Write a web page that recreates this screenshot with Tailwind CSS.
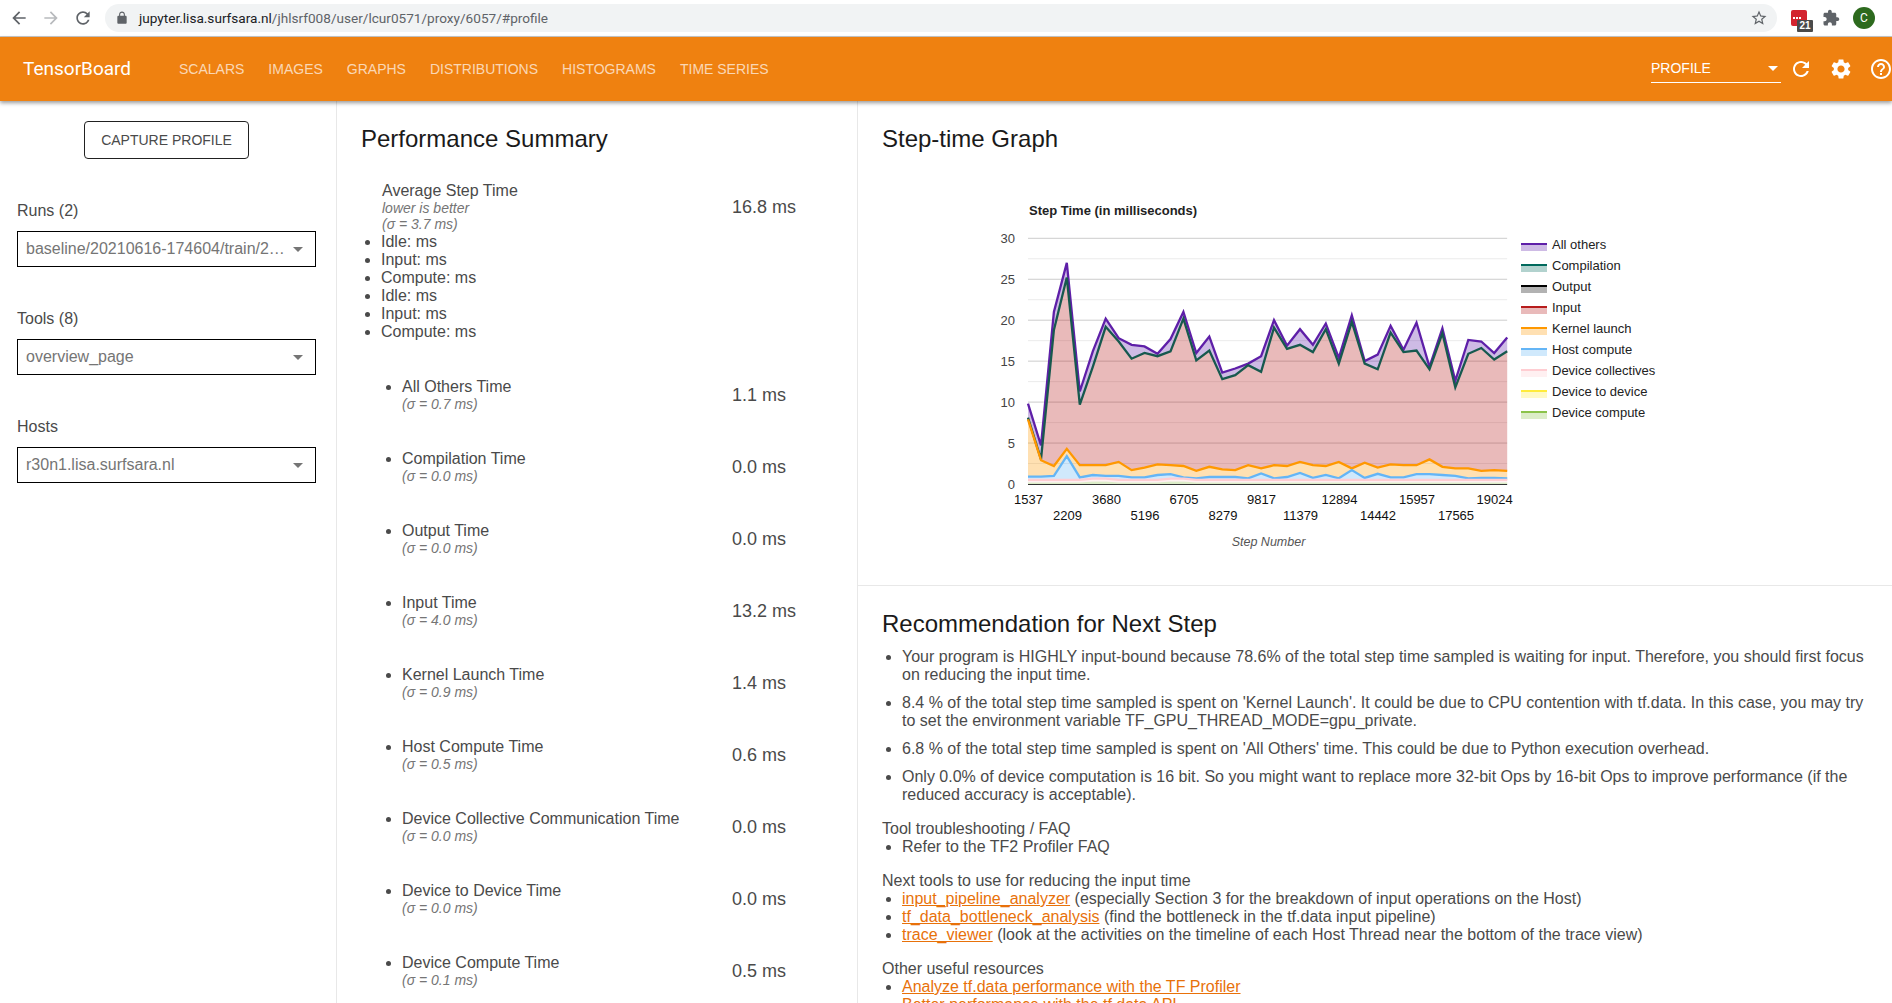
<!doctype html>
<html>
<head>
<meta charset="utf-8">
<script src="https://cdn.jsdelivr.net/npm/@tailwindcss/browser@4"></script>
<title>TensorBoard</title>
</head>
<body class="bg-white">
<div class="h-[1003px] w-[1892px] overflow-hidden flex flex-col font-['Liberation_Sans',Arial,sans-serif] text-[#4a4a4a]">

  <!-- browser chrome -->
  <div class="h-[37px] shrink-0 bg-white border-b border-[#c8c8c8] flex items-center pl-[9px] pb-[1px]">
    <svg class="w-[20px] h-[20px] fill-[#5f6368]" viewBox="0 0 24 24"><path d="M20 11H7.83l5.59-5.59L12 4l-8 8 8 8 1.41-1.41L7.83 13H20v-2z"/></svg>
    <svg class="w-[20px] h-[20px] ml-[12px] fill-[#b8babd]" viewBox="0 0 24 24"><path d="M12 4l-1.41 1.41L16.17 11H4v2h12.17l-5.58 5.59L12 20l8-8z"/></svg>
    <svg class="w-[20px] h-[20px] ml-[12px] fill-[#5f6368]" viewBox="0 0 24 24"><path d="M17.65 6.35C16.2 4.9 14.21 4 12 4c-4.42 0-7.99 3.58-7.99 8s3.57 8 7.99 8c3.73 0 6.84-2.55 7.73-6h-2.08c-.82 2.33-3.04 4-5.65 4-3.31 0-6-2.69-6-6s2.69-6 6-6c1.66 0 3.14.69 4.22 1.78L13 11h7V4l-2.35 2.35z"/></svg>
    <div class="ml-[12px] w-[1672px] h-[28px] rounded-full bg-[#f1f3f4] flex items-center pl-[10px] pr-[9px]">
      <svg class="w-[14px] h-[14px] fill-[#5f6368]" viewBox="0 0 24 24"><path d="M18 8h-1V6c0-2.76-2.24-5-5-5S7 3.24 7 6v2H6c-1.1 0-2 .9-2 2v10c0 1.1.9 2 2 2h12c1.1 0 2-.9 2-2V10c0-1.1-.9-2-2-2zm-6-5.1c1.71 0 3.1 1.39 3.1 3.1v2H8.9V6c0-1.71 1.39-3.1 3.1-3.1z"/></svg>
      <div class="ml-[10px] pt-[1px] text-[13.6px] font-['Roboto',sans-serif] text-[#5f6368]"><span class="text-[#202124]">jupyter.lisa.surfsara.nl</span>/jhlsrf008/user/lcur0571/proxy/6057/#profile</div>
      <svg class="ml-auto w-[18px] h-[18px] fill-[#5f6368]" viewBox="0 0 24 24"><path d="M22 9.24l-7.19-.62L12 2 9.19 8.63 2 9.24l5.46 4.73L5.82 21 12 17.27 18.18 21l-1.63-7.03L22 9.24zM12 15.4l-3.76 2.27 1-4.28-3.32-2.88 4.38-.38L12 6.1l1.71 4.04 4.38.38-3.32 2.88 1 4.28L12 15.4z"/></svg>
    </div>
    <div class="relative ml-[14px] w-[16px] h-[16px] rounded-[2px] bg-[#d3232f] shrink-0">
      <div class="absolute left-[2px] top-[7px] flex gap-[1px]"><span class="w-[2px] h-[2px] bg-white"></span><span class="w-[2px] h-[2px] bg-white"></span><span class="w-[2px] h-[2px] bg-white"></span></div>
      <div class="absolute left-[6px] top-[10px] w-[16px] h-[12px] rounded-[1px] bg-[#4a4a4a] text-white text-[10px] leading-[12px] font-bold text-center">21</div>
    </div>
    <svg class="ml-[15px] w-[18px] h-[18px] fill-[#5f6368] shrink-0" viewBox="0 0 24 24"><path d="M20.5 11H19V7c0-1.1-.9-2-2-2h-4V3.5C13 2.12 11.88 1 10.5 1S8 2.12 8 3.5V5H4c-1.1 0-1.99.9-1.99 2v3.8H3.5c1.49 0 2.7 1.21 2.7 2.7s-1.21 2.7-2.7 2.7H2V20c0 1.1.9 2 2 2h3.8v-1.5c0-1.49 1.21-2.7 2.7-2.7 1.49 0 2.7 1.21 2.7 2.7V22H17c1.1 0 2-.9 2-2v-4h1.5c1.38 0 2.5-1.12 2.5-2.5S21.88 11 20.5 11z"/></svg>
    <div class="ml-[13px] w-[22px] h-[22px] rounded-full bg-[#2d6a1e] text-white text-[12px] leading-[22px] text-center shrink-0 font-['Roboto',sans-serif]">C</div>
  </div>

  <!-- tensorboard header -->
  <header class="relative z-10 h-[64px] shrink-0 bg-[#ef8110] text-white flex items-center pl-[23px] shadow-[0_2px_4px_rgba(0,0,0,0.4)] font-['Roboto',sans-serif] overflow-hidden">
    <div class="text-[19px] w-[108px]">TensorBoard</div>
    <nav class="ml-[48px] flex gap-[24px] text-[14px] text-white/70 font-['Liberation_Sans',sans-serif]">
      <span>SCALARS</span><span>IMAGES</span><span>GRAPHS</span><span>DISTRIBUTIONS</span><span>HISTOGRAMS</span><span>TIME SERIES</span>
    </nav>
    <div class="absolute left-[1651px] top-[19px] w-[130px] h-[27px] border-b border-white flex items-center justify-between pr-[3px] pb-[1px] text-[14px] font-['Liberation_Sans',sans-serif]">
      <span>PROFILE</span><span class="w-0 h-0 border-x-[5px] border-t-[5px] border-x-transparent border-t-white"></span>
    </div>
    <div class="absolute left-[1789px] top-[20px] flex gap-[16px]">
      <svg class="w-[24px] h-[24px] fill-white shrink-0" viewBox="0 0 24 24"><path d="M17.65 6.35C16.2 4.9 14.21 4 12 4c-4.42 0-7.99 3.58-7.99 8s3.57 8 7.99 8c3.73 0 6.84-2.55 7.73-6h-2.08c-.82 2.33-3.04 4-5.65 4-3.31 0-6-2.69-6-6s2.69-6 6-6c1.66 0 3.14.69 4.22 1.78L13 11h7V4l-2.35 2.35z"/></svg>
      <svg class="w-[24px] h-[24px] fill-white shrink-0" viewBox="0 0 24 24"><path d="M19.14 12.94c.04-.3.06-.61.06-.94 0-.32-.02-.64-.07-.94l2.03-1.58c.18-.14.23-.41.12-.61l-1.92-3.32c-.12-.22-.37-.29-.59-.22l-2.39.96c-.5-.38-1.03-.7-1.62-.94l-.36-2.54c-.04-.24-.24-.41-.48-.41h-3.84c-.24 0-.43.17-.47.41l-.36 2.54c-.59.24-1.13.57-1.62.94l-2.39-.96c-.22-.08-.47 0-.59.22L2.74 8.87c-.12.21-.08.47.12.61l2.03 1.58c-.05.3-.09.63-.09.94s.02.64.07.94l-2.03 1.58c-.18.14-.23.41-.12.61l1.92 3.32c.12.22.37.29.59.22l2.39-.96c.5.38 1.03.7 1.62.94l.36 2.54c.05.24.24.41.48.41h3.84c.24 0 .44-.17.47-.41l.36-2.54c.59-.24 1.13-.56 1.62-.94l2.39.96c.22.08.47 0 .59-.22l1.92-3.32c.12-.22.07-.47-.12-.61l-2.01-1.58zM12 15.6c-1.98 0-3.6-1.62-3.6-3.6s1.62-3.6 3.6-3.6 3.6 1.62 3.6 3.6-1.62 3.6-3.6 3.6z"/></svg>
      <svg class="w-[24px] h-[24px] fill-white shrink-0" viewBox="0 0 24 24"><path d="M11 18h2v-2h-2v2zm1-16C6.48 2 2 6.48 2 12s4.48 10 10 10 10-4.48 10-10S17.52 2 12 2zm0 18c-4.41 0-8-3.59-8-8s3.59-8 8-8 8 3.59 8 8-3.59 8-8 8zm0-14c-2.21 0-4 1.79-4 4h2c0-1.1.9-2 2-2s2 .9 2 2c0 2-3 1.75-3 5h2c0-2.25 3-2.5 3-5 0-2.21-1.79-4-4-4z"/></svg>
    </div>
  </header>

  <main class="flex-1 flex min-h-0">
    <!-- sidebar -->
    <aside class="w-[337px] shrink-0 border-r border-[#e8e8e8] pt-[20px] px-[17px]">
      <div class="w-[165px] h-[38px] ml-[67px] border border-[#212121] rounded-[4px] flex items-center justify-center text-[14px] text-[#4a4a4a]">CAPTURE PROFILE</div>

      <div class="mt-[42px] h-[20px] text-[16px] leading-[20px]">Runs (2)</div>
      <div class="mt-[10px] w-[299px] h-[36px] border border-black flex items-center pl-[8px] pr-[12px] text-[16px] text-[#757575]">
        <span class="whitespace-nowrap">baseline/20210616-174604/train/2…</span>
        <span class="ml-auto w-0 h-0 border-x-[5px] border-t-[5px] border-x-transparent border-t-[#757575]"></span>
      </div>

      <div class="mt-[42px] h-[20px] text-[16px] leading-[20px]">Tools (8)</div>
      <div class="mt-[10px] w-[299px] h-[36px] border border-black flex items-center pl-[8px] pr-[12px] text-[16px] text-[#757575]">
        <span>overview_page</span>
        <span class="ml-auto w-0 h-0 border-x-[5px] border-t-[5px] border-x-transparent border-t-[#757575]"></span>
      </div>

      <div class="mt-[42px] h-[20px] text-[16px] leading-[20px]">Hosts</div>
      <div class="mt-[10px] w-[299px] h-[36px] border border-black flex items-center pl-[8px] pr-[12px] text-[16px] text-[#757575]">
        <span>r30n1.lisa.surfsara.nl</span>
        <span class="ml-auto w-0 h-0 border-x-[5px] border-t-[5px] border-x-transparent border-t-[#757575]"></span>
      </div>
    </aside>

    <!-- performance summary -->
    <section class="w-[521px] shrink-0 border-r border-[#e8e8e8] pt-[24px] pl-[24px]">
      <h2 class="text-[24px] leading-[28px] text-[#1a1a1a]">Performance Summary</h2>

      <div class="mt-[29px] flex h-[195px]">
        <div class="w-[371px] text-[16px] leading-[18px]">
          <div class="pl-[21px]">Average Step Time</div>
          <div class="pl-[21px] text-[14px] leading-[16px] italic text-[#757575]">lower is better</div>
          <div class="pl-[21px] text-[14px] leading-[16px] italic text-[#757575]">(σ = 3.7 ms)</div>
          <ul class="list-disc pl-[20px] mt-[1px]">
            <li>Idle: ms</li><li>Input: ms</li><li>Compute: ms</li><li>Idle: ms</li><li>Input: ms</li><li>Compute: ms</li>
          </ul>
        </div>
        <div class="mt-[14px] text-[18px] leading-[22px]">16.8 ms</div>
      </div>

      <div class="flex h-[72px]"><ul class="w-[371px] list-disc pl-[41px] pt-[1px] text-[16px] leading-[18px]"><li>All Others Time<div class="text-[14px] leading-[16px] italic text-[#757575]">(σ = 0.7 ms)</div></li></ul><div class="mt-[7px] text-[18px] leading-[22px]">1.1 ms</div></div>
      <div class="flex h-[72px]"><ul class="w-[371px] list-disc pl-[41px] pt-[1px] text-[16px] leading-[18px]"><li>Compilation Time<div class="text-[14px] leading-[16px] italic text-[#757575]">(σ = 0.0 ms)</div></li></ul><div class="mt-[7px] text-[18px] leading-[22px]">0.0 ms</div></div>
      <div class="flex h-[72px]"><ul class="w-[371px] list-disc pl-[41px] pt-[1px] text-[16px] leading-[18px]"><li>Output Time<div class="text-[14px] leading-[16px] italic text-[#757575]">(σ = 0.0 ms)</div></li></ul><div class="mt-[7px] text-[18px] leading-[22px]">0.0 ms</div></div>
      <div class="flex h-[72px]"><ul class="w-[371px] list-disc pl-[41px] pt-[1px] text-[16px] leading-[18px]"><li>Input Time<div class="text-[14px] leading-[16px] italic text-[#757575]">(σ = 4.0 ms)</div></li></ul><div class="mt-[7px] text-[18px] leading-[22px]">13.2 ms</div></div>
      <div class="flex h-[72px]"><ul class="w-[371px] list-disc pl-[41px] pt-[1px] text-[16px] leading-[18px]"><li>Kernel Launch Time<div class="text-[14px] leading-[16px] italic text-[#757575]">(σ = 0.9 ms)</div></li></ul><div class="mt-[7px] text-[18px] leading-[22px]">1.4 ms</div></div>
      <div class="flex h-[72px]"><ul class="w-[371px] list-disc pl-[41px] pt-[1px] text-[16px] leading-[18px]"><li>Host Compute Time<div class="text-[14px] leading-[16px] italic text-[#757575]">(σ = 0.5 ms)</div></li></ul><div class="mt-[7px] text-[18px] leading-[22px]">0.6 ms</div></div>
      <div class="flex h-[72px]"><ul class="w-[371px] list-disc pl-[41px] pt-[1px] text-[16px] leading-[18px]"><li>Device Collective Communication Time<div class="text-[14px] leading-[16px] italic text-[#757575]">(σ = 0.0 ms)</div></li></ul><div class="mt-[7px] text-[18px] leading-[22px]">0.0 ms</div></div>
      <div class="flex h-[72px]"><ul class="w-[371px] list-disc pl-[41px] pt-[1px] text-[16px] leading-[18px]"><li>Device to Device Time<div class="text-[14px] leading-[16px] italic text-[#757575]">(σ = 0.0 ms)</div></li></ul><div class="mt-[7px] text-[18px] leading-[22px]">0.0 ms</div></div>
      <div class="flex h-[72px]"><ul class="w-[371px] list-disc pl-[41px] pt-[1px] text-[16px] leading-[18px]"><li>Device Compute Time<div class="text-[14px] leading-[16px] italic text-[#757575]">(σ = 0.1 ms)</div></li></ul><div class="mt-[7px] text-[18px] leading-[22px]">0.5 ms</div></div>
    </section>

    <!-- right column -->
    <section class="flex-1 min-w-0">
      <div class="h-[485px] border-b border-[#e8e8e8] pt-[24px]">
        <h2 class="pl-[24px] text-[24px] leading-[28px] text-[#1a1a1a]">Step-time Graph</h2>
        <svg id="chart" class="block mt-[37px] w-[1034px] h-[390px] font-['Liberation_Sans',sans-serif]" viewBox="858 190 1034 390">
          <text x="1029" y="215" font-size="13" font-weight="bold" fill="#222">Step Time (in milliseconds)</text>
          <g id="grid"></g>
          <g id="areas"></g>
          <g font-size="13" fill="#444" text-anchor="end">
            <text x="1015" y="243">30</text><text x="1015" y="284">25</text><text x="1015" y="325">20</text><text x="1015" y="366">15</text><text x="1015" y="407">10</text><text x="1015" y="448">5</text><text x="1015" y="489">0</text>
          </g>
          <g font-size="13" fill="#111" text-anchor="middle">
            <text x="1028.5" y="504">1537</text><text x="1067.5" y="520">2209</text><text x="1106.5" y="504">3680</text><text x="1145" y="520">5196</text><text x="1184" y="504">6705</text><text x="1223" y="520">8279</text><text x="1261.5" y="504">9817</text><text x="1300.5" y="520">11379</text><text x="1339.5" y="504">12894</text><text x="1378" y="520">14442</text><text x="1417" y="504">15957</text><text x="1456" y="520">17565</text><text x="1494.7" y="504">19024</text>
          </g>
          <text x="1268.5" y="546" font-size="12.5" font-style="italic" fill="#555" text-anchor="middle">Step Number</text>
          <g font-size="13" fill="#222">
            <text x="1552" y="249">All others</text><text x="1552" y="270">Compilation</text><text x="1552" y="291">Output</text><text x="1552" y="312">Input</text><text x="1552" y="333">Kernel launch</text><text x="1552" y="354">Host compute</text><text x="1552" y="375">Device collectives</text><text x="1552" y="396">Device to device</text><text x="1552" y="417">Device compute</text>
          </g>
          <g id="legend"></g>
        </svg>
      </div>

      <div class="pt-[24px] px-[24px] text-[16px] leading-[18px]">
        <h2 class="text-[24px] leading-[28px] text-[#1a1a1a]">Recommendation for Next Step</h2>
        <ul class="mt-[10px] list-disc pl-[20px]">
          <li class="mb-[10px]">Your program is HIGHLY input-bound because 78.6% of the total step time sampled is waiting for input. Therefore, you should first focus on reducing the input time.</li>
          <li class="mb-[10px]">8.4 % of the total step time sampled is spent on 'Kernel Launch'. It could be due to CPU contention with tf.data. In this case, you may try to set the environment variable TF_GPU_THREAD_MODE=gpu_private.</li>
          <li class="mb-[10px]">6.8 % of the total step time sampled is spent on 'All Others' time. This could be due to Python execution overhead.</li>
          <li>Only 0.0% of device computation is 16 bit. So you might want to replace more 32-bit Ops by 16-bit Ops to improve performance (if the reduced accuracy is acceptable).</li>
        </ul>
        <p class="mt-[16px]">Tool troubleshooting / FAQ</p>
        <ul class="list-disc pl-[20px]"><li>Refer to the TF2 Profiler FAQ</li></ul>
        <p class="mt-[16px]">Next tools to use for reducing the input time</p>
        <ul class="list-disc pl-[20px]">
          <li><a class="underline text-[#e8710a]">input_pipeline_analyzer</a> (especially Section 3 for the breakdown of input operations on the Host)</li>
          <li><a class="underline text-[#e8710a]">tf_data_bottleneck_analysis</a> (find the bottleneck in the tf.data input pipeline)</li>
          <li><a class="underline text-[#e8710a]">trace_viewer</a> (look at the activities on the timeline of each Host Thread near the bottom of the trace view)</li>
        </ul>
        <p class="mt-[16px]">Other useful resources</p>
        <ul class="list-disc pl-[20px]">
          <li><a class="underline text-[#e8710a]">Analyze tf.data performance with the TF Profiler</a></li>
          <li><a class="underline text-[#e8710a]">Better performance with the tf.data API</a></li>
        </ul>
      </div>
    </section>
  </main>
</div>

<script>
(function(){
  var NS='http://www.w3.org/2000/svg';
  var x0=1028,dx=12.95,y0=484,k=8.19,xr=x0+37*dx;
  function el(parent,name,attrs){var e=document.createElementNS(NS,name);for(var a in attrs)e.setAttribute(a,attrs[a]);parent.appendChild(e);return e;}
  var grid=document.getElementById('grid');
  for(var i=1;i<=12;i++){var y=y0-i*2.5*k;el(grid,'line',{x1:x0,x2:xr,y1:y,y2:y,stroke:i%2?'#ebebeb':'#cccccc','stroke-width':1});}
  var all=[9.8,4.7,21,27,11.3,16.2,20.2,17.8,17,16.8,15.9,17.7,21,16,18,13.6,14.1,14.7,15.6,20,16.9,18.9,17,19.6,15.4,20.6,15,15.8,19.3,16.4,19.7,14.3,19,12.6,17.6,17.4,16,17.9];
  var green=[8.1,3,18.8,25.2,9.7,14.3,19.2,17.4,15.3,16,15.6,16.2,20.2,15.1,16.3,12.8,13.3,14.5,13.7,19.1,16.5,17,16.1,18.9,14.7,19.8,14.7,14,18.5,16.1,16.3,14,18.4,11.8,15.9,16.6,15.2,16.2];
  var orange=[7.9,2.9,2.2,4.3,2.3,2.3,2.3,2.7,1.7,2,2.4,2.3,2.2,1.6,2.1,1.8,1.7,2.3,1.9,2.3,2.2,2.7,2.3,2.2,2.7,1.9,2.6,2,2.4,2.3,2.3,3,2.1,1.9,1.9,1.6,1.7,1.6];
  var blue=[.9,.9,1,3.4,.8,1.1,1,1,.8,.8,1.1,1.2,.8,.7,.85,.85,.85,.7,1.3,.7,.85,1.35,.75,1.1,.7,1.7,.75,1.25,.8,.8,1.2,1.2,1.1,1,.7,.75,.75,.7];
  var pink=[],low=[];
  for(i=0;i<38;i++){pink.push(i==5||i==6||i==11||i==12?.65:.5);low.push(i==5||i==6||i==11||i==12?.3:.18);}
  var layers=[[low,'#8bc34a',0],[pink,'#ffcdd2',1],[blue,'#64b5f6',1],[orange,'#ff9800',1],[green,'#b71c1c',0],[green,'#17594e',1],[all,'#5e1fa8',1]];
  var areas=document.getElementById('areas');
  var prev=null;
  function pts(a){return a.map(function(v,i){return (x0+i*dx).toFixed(1)+','+(y0-v*k).toFixed(1);});}
  var lines=[];
  layers.forEach(function(l){
    var top=pts(l[0]),bot=prev?pts(prev).reverse():[xr.toFixed(1)+','+y0,x0.toFixed(1)+','+y0];
    if(l[0]!==prev){el(areas,'polygon',{points:top.concat(bot).join(' '),fill:l[1]==='#17594e'?'#5e1fa8':l[1],'fill-opacity':.3});}
    if(l[2])lines.push([top,l[1]]);
    prev=l[0];
  });
  lines.reverse();
  lines.forEach(function(l){el(areas,'polyline',{points:l[0].join(' '),fill:'none',stroke:l[1],'stroke-width':2.3});});
  el(areas,'line',{x1:x0,x2:xr,y1:y0+.5,y2:y0+.5,stroke:'#333','stroke-width':1});
  var lg=document.getElementById('legend');
  var cols=['#5e1fa8','#00695c','#000000','#b71c1c','#ff9800','#64b5f6','#ffcdd2','#ffeb3b','#8bc34a'];
  cols.forEach(function(c,i){var y=243+i*21;el(lg,'rect',{x:1521,y:y,width:26,height:8,fill:c,'fill-opacity':.3});el(lg,'rect',{x:1521,y:y,width:26,height:2,fill:c});});
})();
</script>
</body>
</html>
